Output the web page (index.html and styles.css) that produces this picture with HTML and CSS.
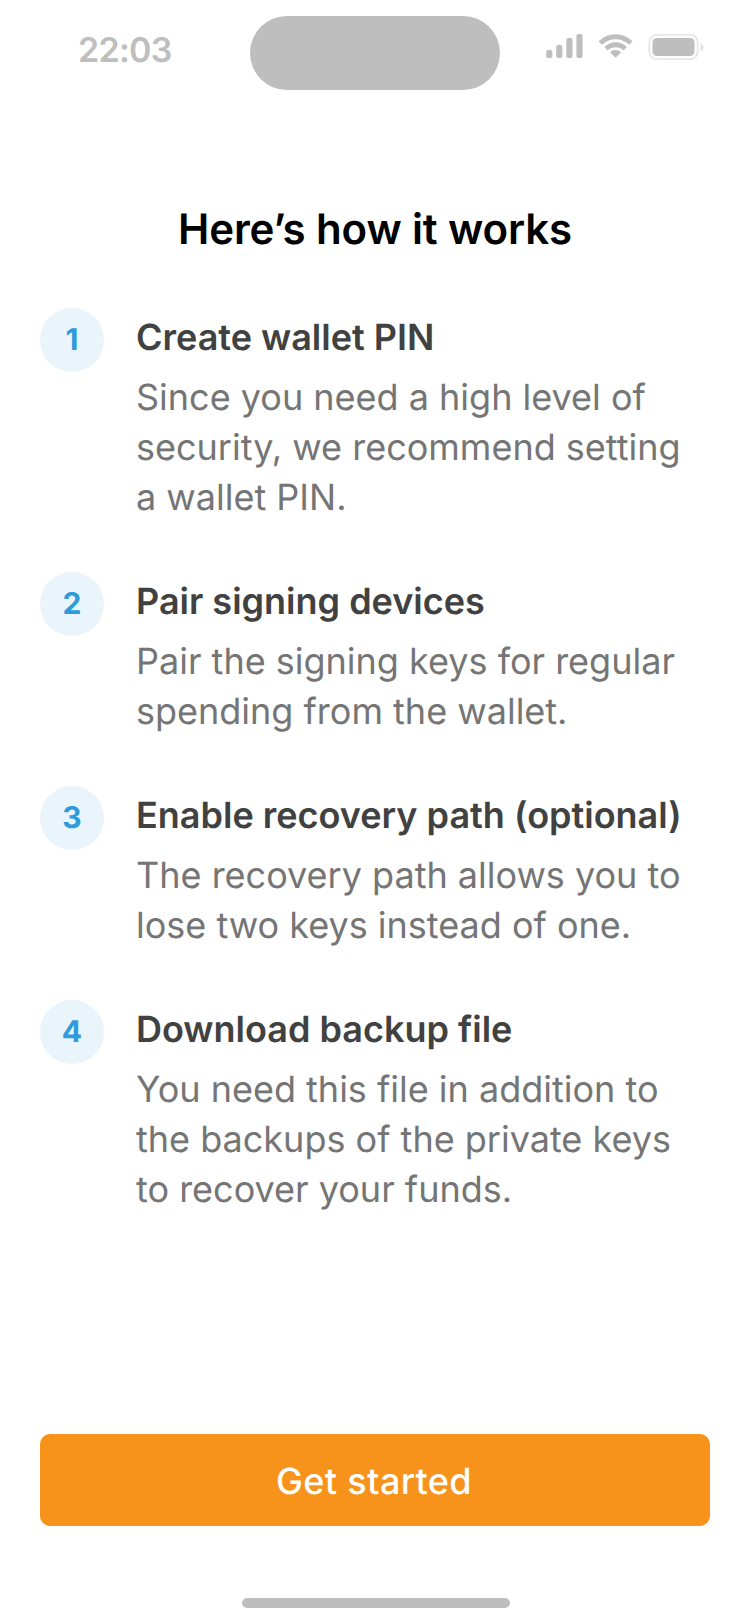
FILE: index.html
```html
<!DOCTYPE html>
<html lang="en">
<head>
<meta charset="utf-8">
<title>Here’s how it works</title>
<link rel="stylesheet" href="styles.css">
</head>
<body>
<main class="screen">
  <header class="status">
    <div class="time">22:03</div>
    <div class="island"></div>
    <svg class="indicators" width="160" height="30" viewBox="0 0 160 30">
      <g fill="#bebebe">
        <rect x="0.200" y="18" width="6.200" height="8" rx="2"/>
        <rect x="10.200" y="13" width="6.200" height="13" rx="2"/>
        <rect x="20.300" y="6" width="6.200" height="20" rx="2"/>
        <rect x="30.400" y="2" width="6.200" height="24" rx="2"/>
        <rect x="106.500" y="6" width="42" height="18" rx="4.500"/>
        <path d="M64 20.200A8.200 8.200 0 0 1 75.200 20.200L69.600 25.700Z"/>
      </g>
      <g fill="none" stroke="#bebebe" stroke-width="4.800">
        <path d="M54.300 11.100A21.600 21.600 0 0 1 84.900 11.100"/>
        <path d="M60 16.700A13.600 13.600 0 0 1 79.200 16.700"/>
      </g>
      <rect x="103.300" y="2.800" width="48.400" height="24.400" rx="7.500" fill="none" stroke="#e7e7e7" stroke-width="1.800"/>
      <path d="M154.500 11.500v8q3-1.200 3-4t-3-4z" fill="#e2e2e2"/>
    </svg>
  </header>
  <h1 class="title">Here’s how it works</h1>
  <ol class="steps">
    <li class="step"><span class="num">1</span><div class="body"><h2 class="name">Create wallet PIN</h2><p class="desc">Since you need a high level of<br>security, we recommend setting<br>a wallet PIN.</p></div></li>
    <li class="step"><span class="num">2</span><div class="body"><h2 class="name">Pair signing devices</h2><p class="desc">Pair the signing keys for regular<br>spending from the wallet.</p></div></li>
    <li class="step"><span class="num">3</span><div class="body"><h2 class="name">Enable recovery path (optional)</h2><p class="desc">The recovery path allows you to<br>lose two keys instead of one.</p></div></li>
    <li class="step"><span class="num">4</span><div class="body"><h2 class="name">Download backup file</h2><p class="desc">You need this file in addition to<br>the backups of the private keys<br>to recover your funds.</p></div></li>
  </ol>
  <button class="cta">Get started</button>
  <div class="home"></div>
</main>
</body>
</html>
```
FILE: styles.css
```css
* { box-sizing: border-box; margin: 0; padding: 0; }
body { background: #fff; font-family: Inter, sans-serif; text-rendering: geometricPrecision; }
.screen { width: 750px; height: 1624px; display: flex; flex-direction: column; overflow: hidden; }
.status { height: 200px; display: grid; grid-template-columns: 250px 250px 250px; align-items: start; padding-top: 16px; }
.time { padding: 14px 0 0 78px; font-size: 34px; line-height: 42px; font-weight: 600; letter-spacing: -0.7px; color: #bebebe; }
.island { height: 74px; border-radius: 37px; background: #bebebe; }
.indicators { margin: 16px 0 0 46px; }
.title { height: 60px; line-height: 60px; text-align: center; font-size: 42px; font-weight: 600; letter-spacing: -0.12px; color: #000; }
.steps { list-style: none; display: flex; flex-direction: column; gap: 50px; margin-top: 48px; padding-left: 40px; }
.step { display: flex; gap: 32px; }
.num { flex: none; width: 64px; height: 64px; border-radius: 50%; background: #e9f4fb; color: #2f9bdb; font-size: 30px; font-weight: 700; line-height: 62px; padding-top: 1px; text-align: center; }
.body { padding-top: 7px; white-space: nowrap; }
.name { font-size: 36px; line-height: 44px; font-weight: 600; color: #414141; }
.desc { margin-top: 13px; font-size: 36px; line-height: 50px; color: #757575; }
.cta { margin: auto 40px 0; height: 92px; flex: none; border: 0; border-radius: 10px; background: #f7931a; color: #fff; font: 500 36px/92px Inter, sans-serif; letter-spacing: 0.35px; padding: 1px 2px 0 0; text-rendering: inherit; }
.home { width: 268px; height: 10px; flex: none; margin: 72px 0 16px 242px; border-radius: 5px; background: #bebebe; }
```
